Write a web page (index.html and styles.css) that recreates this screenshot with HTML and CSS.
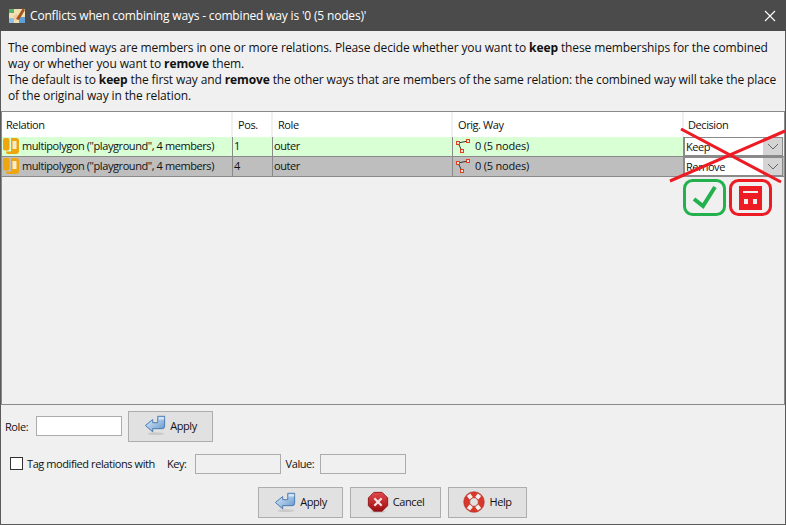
FILE: index.html
```html
<!DOCTYPE html>
<html lang="en">
<head>
<meta charset="utf-8">
<title>Conflicts when combining ways</title>
<link rel="stylesheet" href="styles.css">
</head>
<body>
<svg class="defs" width="0" height="0" aria-hidden="true">
  <defs>
    <linearGradient id="arrowFill" x1="0" y1="0" x2="1" y2="1">
      <stop offset="0" stop-color="#e3edf8"/><stop offset="0.55" stop-color="#9dbfe2"/><stop offset="1" stop-color="#5b8fc6"/>
    </linearGradient>
    <linearGradient id="stopFill" x1="0" y1="0" x2="0" y2="1">
      <stop offset="0" stop-color="#e4484a"/><stop offset="1" stop-color="#9c0f12"/>
    </linearGradient>
    <symbol id="i-apply" viewBox="0 0 24 24">
      <ellipse cx="13" cy="21.5" rx="9" ry="1.5" fill="#c9c9c9"/>
      <path d="M1.5 12.5 L9.5 6 V9.5 H15 V2.5 H22.5 V13.5 Q22.5 16 20 16 H9.5 V19.5 Z" fill="url(#arrowFill)" stroke="#3f74ad" stroke-width="1" stroke-linejoin="round"/>
      <path d="M16 3.5 H22 V6 H16 Z" fill="#eef4fb" opacity=".7"/>
    </symbol>
    <symbol id="i-rel" viewBox="0 0 16 16">
      <rect x="0" y="0" width="6.5" height="12.5" rx="2" fill="#eda60f"/>
      <path d="M8 0 H13 Q16 0 16 3 V13 Q16 16 13 16 H5 Q3 16 3 14 V13.5 H8 Z" fill="#eda60f"/>
      <rect x="9.5" y="3" width="4" height="8" fill="#f7ecd0"/>
    </symbol>
    <symbol id="i-way" viewBox="0 0 16 16">
      <path d="M3 5 L13 3 M3 5 L7 13" fill="none" stroke="#333" stroke-width="1"/>
      <rect x="1.5" y="3.5" width="3" height="3" fill="#f6e7df" stroke="#e2401b"/>
      <rect x="11.5" y="1.5" width="3" height="3" fill="#f6e7df" stroke="#e2401b"/>
      <rect x="5.5" y="11.5" width="3" height="3" fill="#f6e7df" stroke="#e2401b"/>
    </symbol>
  </defs>
</svg>
<div class="window">
  <header class="titlebar">
    <svg class="app-icon" viewBox="0 0 16 16" width="16" height="16" aria-hidden="true">
      <rect x="0" y="1" width="16" height="14" fill="#efe2b0"/>
      <rect x="0" y="1" width="5" height="4" fill="#58b168"/>
      <rect x="0" y="10" width="5" height="5" fill="#8ec0e8"/>
      <rect x="10" y="9" width="6" height="6" fill="#5f9fd9"/>
      <path d="M4 8 L8 6 L11 10 L6 13 Z" fill="#f2c9a2"/>
      <path d="M7 11 L14 0 L16 2 L10 12 Z" fill="#a8531e"/>
    </svg>
    <span class="title-text">Conflicts when combining ways - combined way is '0 (5 nodes)'</span>
    <svg class="close-x" viewBox="0 0 12 12" width="12" height="12" aria-hidden="true">
      <path d="M1 1 L11 11 M11 1 L1 11" stroke="#fff" stroke-width="1.1"/>
    </svg>
  </header>

  <main class="content">
    <section class="intro">
      <p>The combined ways are members in one or more relations. Please decide whether you want to <b>keep</b> these memberships for the combined<br>way or whether you want to <b>remove</b> them.</p>
      <p>The default is to <b>keep</b> the first way and <b>remove</b> the other ways that are members of the same relation: the combined way will take the place<br>of the original way in the relation.</p>
    </section>

    <section class="table-pane">
      <div class="grid-row head">
        <div class="hcell">Relation</div>
        <div class="hcell">Pos.</div>
        <div class="hcell">Role</div>
        <div class="hcell">Orig. Way</div>
        <div class="hcell last">Decision</div>
      </div>
      <div class="grid-row row keep">
        <div class="cell rel"><svg class="ico16"><use href="#i-rel"/></svg>multipolygon ("playground", 4 members)</div>
        <div class="cell">1</div>
        <div class="cell">outer</div>
        <div class="cell way"><svg class="ico16"><use href="#i-way"/></svg>0 (5 nodes)</div>
        <div class="cell combo-cell"><div class="combo"><span class="combo-val">Keep</span><span class="combo-btn"><svg viewBox="0 0 12 7" width="12" height="7"><path d="M1 1 L6 6 L11 1" fill="none" stroke="#666"/></svg></span></div></div>
      </div>
      <div class="grid-row row remove">
        <div class="cell rel"><svg class="ico16"><use href="#i-rel"/></svg>multipolygon ("playground", 4 members)</div>
        <div class="cell">4</div>
        <div class="cell">outer</div>
        <div class="cell way"><svg class="ico16"><use href="#i-way"/></svg>0 (5 nodes)</div>
        <div class="cell combo-cell"><div class="combo"><span class="combo-val">Remove</span><span class="combo-btn"><svg viewBox="0 0 12 7" width="12" height="7"><path d="M1 1 L6 6 L11 1" fill="none" stroke="#666"/></svg></span></div></div>
      </div>
    </section>

    <section class="role-row">
      <label class="lbl role-lbl">Role:</label>
      <span class="input"></span>
      <button class="btn btn-role"><svg class="ico24"><use href="#i-apply"/></svg>Apply</button>
    </section>

    <section class="tag-row">
      <span class="check"></span>
      <span class="lbl tag-lbl">Tag modified relations with</span>
      <span class="lbl key-lbl">Key:</span>
      <span class="input off"></span>
      <span class="lbl val-lbl">Value:</span>
      <span class="input off"></span>
    </section>

    <section class="actions">
      <button class="btn btn-apply"><svg class="ico24"><use href="#i-apply"/></svg>Apply</button>
      <button class="btn btn-cancel">
        <svg class="ico24" viewBox="0 0 24 24">
          <ellipse cx="12" cy="22.5" rx="8" ry="1.3" fill="#c9c9c9"/>
          <path d="M7.5 1.5 H16.5 L22.5 7.5 V16 L16.5 22 H7.5 L1.5 16 V7.5 Z" fill="url(#stopFill)" stroke="#8a1416"/>
          <path d="M8 8 L16 16 M16 8 L8 16" stroke="#f7e3e3" stroke-width="2.4"/>
        </svg>Cancel</button>
      <button class="btn btn-help">
        <svg class="ico24" viewBox="0 0 24 24">
          <circle cx="12" cy="12" r="8" fill="none" stroke="#d8382c" stroke-width="6.5"/>
          <path d="M6 4 L9 8 M18 4 L15 8 M6 20 L9 16 M18 20 L15 16" stroke="#f3efec" stroke-width="4.5"/>
          <circle cx="12" cy="12" r="11.3" fill="none" stroke="#a52b22" stroke-width=".6"/>
          <circle cx="12" cy="12" r="4.6" fill="none" stroke="#a52b22" stroke-width=".6"/>
        </svg>Help</button>
    </section>
  </main>

  <svg class="overlay-x" viewBox="0 0 118 56" width="118" height="56" aria-hidden="true">
    <path d="M13 1 L113 54 M117 3 L2 53" stroke="#ed1c24" stroke-width="3"/>
  </svg>
  <svg class="overlay-ok" viewBox="0 0 43 37" width="43" height="37" aria-hidden="true">
    <rect x="1.5" y="1.5" width="40" height="34" rx="8" fill="none" stroke="#22b14c" stroke-width="3"/>
    <path d="M11 20 L20 27 L32 8" fill="none" stroke="#22b14c" stroke-width="4"/>
  </svg>
  <svg class="overlay-rm" viewBox="0 0 43 37" width="43" height="37" aria-hidden="true">
    <rect x="1.5" y="1.5" width="40" height="34" rx="8" fill="none" stroke="#ed1c24" stroke-width="3"/>
    <rect x="10" y="7" width="23" height="24" fill="#ed1c24"/>
    <rect x="14" y="12" width="15" height="2" fill="#f0f0f0"/>
    <rect x="15" y="20" width="4" height="5" fill="#f0f0f0"/>
    <rect x="24" y="20" width="4" height="5" fill="#f0f0f0"/>
  </svg>
</div>
</body>
</html>
```
FILE: styles.css
```css
* { box-sizing: border-box; }
html, body { margin: 0; padding: 0; }
body { width: 786px; height: 525px; overflow: hidden; background: #f0f0f0; }
.defs { position: absolute; }
.window {
  position: relative;
  width: 786px;
  height: 525px;
  border: 1px solid #5a5a5a;
  border-top: 0;
  background: #f0f0f0;
  font-family: "Open Sans", "Noto Sans", sans-serif;
  font-size: 11px;
  letter-spacing: -0.42px;
  color: #111;
  display: flex;
  flex-direction: column;
}
.titlebar {
  height: 31px;
  flex: none;
  background: #4b4b4b;
  color: #fff;
  display: flex;
  align-items: center;
  padding: 0 10px 0 9px;
  font-size: 12px;
  letter-spacing: -0.18px;
  margin: 0 -1px;
}
.title-text { margin-left: 5px; flex: 1; }
.content { flex: 1; display: flex; flex-direction: column; min-height: 0; }
.intro { padding: 9px 7px 0; height: 80px; font-size: 12px; line-height: 16px; letter-spacing: -0.115px; }
.intro p { margin: 0; white-space: nowrap; }
.table-pane {
  height: 294px;
  background: #f0f0f0;
  border: 1px solid #8a8a8a;
  flex: none;
}
.grid-row { display: grid; grid-template-columns: 231px 40px 180px 231px 99px; }
.head { height: 25px; background: #fff; }
.hcell { padding: 5px 0 0 5px; border-right: 2px solid #f0f0f0; white-space: nowrap; }
.hcell:first-child { padding-left: 4px; }
.hcell.last { border-right: 0; padding-left: 4px; }
.row { height: 20px; border-bottom: 1px solid #8a8a8a; }
.row.keep { background: #d9ffd5; }
.row.remove { background: #bebebe; }
.cell {
  display: flex;
  align-items: center;
  padding: 0 0 1px 1px;
  border-right: 1px solid #8a8a8a;
  white-space: nowrap;
  line-height: 18px;
}
.ico16 { width: 16px; height: 16px; flex: none; margin-right: 3px; }
.way { padding-left: 2px; letter-spacing: -0.2px; }
.way .ico16 { margin-right: 4px; }
.combo-cell { padding: 0; border-right: 0; }
.combo {
  width: 99px;
  height: 19px;
  display: flex;
  border: 1px solid #8a8a8a;
  background: #d4d4d4;
}
.combo-val { width: 78px; background: #fff; padding-left: 1px; line-height: 17px; }
.combo-btn { flex: 1; display: flex; align-items: center; justify-content: center; }
.role-row { display: flex; align-items: center; height: 41px; padding: 1px 0 0 4px; flex: none; }
.role-lbl { width: 26px; }
.role-row .input { margin-left: 5px; }
.btn-role { margin-left: 6px; }
.input {
  display: block;
  width: 86px;
  height: 20px;
  background: #fff;
  border: 1px solid #acacac;
}
.input.off { background: #f0f0f0; }
.btn {
  display: flex;
  align-items: center;
  height: 31px;
  background: #e1e1e1;
  border: 1px solid #adadad;
  font: inherit;
  letter-spacing: inherit;
  color: inherit;
  padding: 0 0 2px;
  justify-content: center;
  gap: 4px;
}
.ico24 { width: 22px; height: 22px; flex: none; }
.btn-role, .btn-apply { width: 85px; }
.btn-cancel { width: 91px; }
.btn-help { width: 79px; }
.tag-row { display: flex; align-items: center; height: 35px; padding-left: 9px; flex: none; }
.check { width: 13px; height: 13px; border: 1px solid #333; background: #fff; }
.tag-lbl { margin-left: 4px; }
.key-lbl { margin-left: 12px; }
.key-lbl + .input { margin-left: 8px; }
.val-lbl { margin-left: 5px; }
.val-lbl + .input { margin-left: 6px; }
.actions { display: flex; justify-content: center; gap: 7px; padding: 6px 1px 0 0; flex: none; }
.overlay-x { position: absolute; left: 667px; top: 128px; }
.overlay-ok { position: absolute; left: 682px; top: 179px; }
.overlay-rm { position: absolute; left: 728px; top: 179px; }
```
